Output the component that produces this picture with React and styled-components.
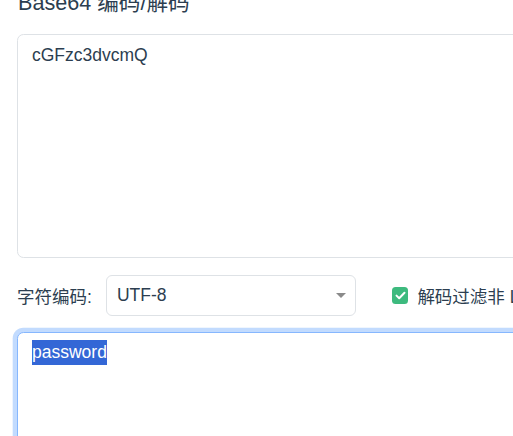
import React from "react";
import styled, { createGlobalStyle } from "styled-components";

const GlobalStyle = createGlobalStyle`
  html, body {
    margin: 0;
    padding: 0;
    background: #ffffff;
    overflow: hidden;
  }
  body {
    font-family: "Liberation Sans", Arial, "Noto Sans CJK SC", sans-serif;
    color: #2c3e50;
  }
`;

const Page = styled.div`
  width: 900px;
  padding-left: 17px;
  box-sizing: border-box;
`;

const Title = styled.h2`
  margin: -9px 0 19px;
  padding-left: 1px;
  font-size: 21.6px;
  line-height: 24px;
  font-weight: 400;
  color: #2c3e50;
  white-space: nowrap;
`;

const TextArea = styled.textarea`
  display: block;
  box-sizing: border-box;
  width: 100%;
  height: 224px;
  margin: 0;
  padding: 6.5px 14px;
  border: 1px solid #dee2e6;
  border-radius: 6.5px;
  font-family: "Liberation Sans", Arial, "Noto Sans CJK SC", sans-serif;
  font-size: 17.5px;
  line-height: 26px;
  color: #2c3e50;
  background: #fff;
  resize: vertical;
  outline: none;
`;

const OptionsRow = styled.div`
  display: flex;
  align-items: center;
  margin-top: 17px;
  height: 41px;
  font-size: 17.5px;
  white-space: nowrap;
`;

const FieldLabel = styled.span`
  margin-right: 14px;
  color: #2c3e50;
`;

const SelectBox = styled.div`
  box-sizing: border-box;
  width: 250px;
  height: 41px;
  display: flex;
  align-items: center;
  justify-content: space-between;
  padding: 0 9px 0 10px;
  border: 1px solid #dee2e6;
  border-radius: 6px;
  background: #fff;
  color: #2c3e50;
`;

const Caret = styled.span`
  width: 0;
  height: 0;
  border-left: 5px solid transparent;
  border-right: 5px solid transparent;
  border-top: 5px solid #8a8a8a;
`;

const CheckGroup = styled.label`
  display: flex;
  align-items: center;
  gap: 9px;
  margin-left: 36px;
  color: #2c3e50;
`;

const CheckBox = styled.span`
  width: 16.5px;
  height: 16.5px;
  border-radius: 3.5px;
  background: #3dba7e;
  display: flex;
  align-items: center;
  justify-content: center;
`;

const OutputBox = styled.div`
  box-sizing: border-box;
  width: 100%;
  height: 224px;
  margin-top: 16px;
  padding: 6.5px 14px;
  border: 1px solid #86b7fe;
  border-radius: 6.5px;
  box-shadow: 0 0 0 4.3px rgba(13, 110, 253, 0.25);
  font-size: 17.5px;
  line-height: 26px;
  color: #2c3e50;
  background: #fff;
`;

const Selected = styled.span`
  display: inline-block;
  vertical-align: top;
  line-height: 25px;
  background: #3367d6;
  color: #ffffff;
`;

export default function App() {
  return (
    <>
      <GlobalStyle />
      <Page>
        <Title>Base64 编码/解码</Title>
        <TextArea readOnly defaultValue="cGFzc3dvcmQ" />
        <OptionsRow>
          <FieldLabel>字符编码:</FieldLabel>
          <SelectBox>
            <span>UTF-8</span>
            <Caret />
          </SelectBox>
          <CheckGroup>
            <CheckBox>
              <svg width="11" height="9" viewBox="0 0 11 9" fill="none">
                <path
                  d="M1.5 4.6 L4.2 7.2 L9.5 1.8"
                  stroke="#ffffff"
                  strokeWidth="2"
                  strokeLinecap="round"
                  strokeLinejoin="round"
                />
              </svg>
            </CheckBox>
            <span>解码过滤非 Latin1 字符</span>
          </CheckGroup>
        </OptionsRow>
        <OutputBox>
          <Selected>password</Selected>
        </OutputBox>
      </Page>
    </>
  );
}
